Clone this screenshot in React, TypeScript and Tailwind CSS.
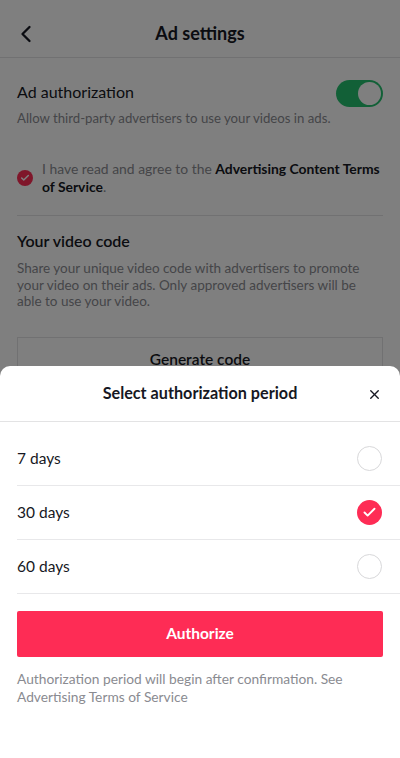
import { ChevronLeft, X, Check } from 'lucide-react'

const periods = [
  { label: '7 days', selected: false },
  { label: '30 days', selected: true },
  { label: '60 days', selected: false },
]

function Toggle() {
  return (
    <div className="flex h-[27px] w-[47px] items-center justify-end rounded-full bg-[#25c16f] px-[2px]">
      <div className="h-[23px] w-[23px] rounded-full bg-white" />
    </div>
  )
}

function Radio({ on }: { on: boolean }) {
  if (on) {
    return (
      <div className="flex h-[25px] w-[25px] items-center justify-center rounded-full bg-[#fe2c55]">
        <Check className="h-[15px] w-[15px] text-white" strokeWidth={3} />
      </div>
    )
  }
  return <div className="h-[25px] w-[25px] rounded-full border border-[#d8d8da]" />
}

export default function App() {
  return (
    <div
      className="relative h-[758px] w-[400px] overflow-hidden bg-white text-[#161823]"
      style={{ fontFamily: 'Lato, "Liberation Sans", sans-serif' }}
    >
      {/* Background page */}
      <div className="flex h-[58px] items-center justify-center border-b border-[#e3e3e4] pt-[10px]">
        <ChevronLeft className="absolute left-[12px] top-[20px] h-[28px] w-[28px]" strokeWidth={2} />
        <h1 className="text-[18px] font-bold">Ad settings</h1>
      </div>

      <div className="px-[17px]">
        <div className="flex items-start justify-between pt-[22px]">
          <div>
            <div className="text-[16px] leading-[24px]">Ad authorization</div>
            <div className="mt-[6px] text-[13.2px] leading-[16px] text-[#8a8b91]">
              Allow third-party advertisers to use your videos in ads.
            </div>
          </div>
          <Toggle />
        </div>

        <div className="mt-[34px] flex items-center gap-[9px] border-b border-[#e3e3e4] pb-[19px]">
          <div className="flex h-[16px] w-[16px] shrink-0 items-center justify-center rounded-full bg-[#fe2c55]">
            <Check className="h-[10px] w-[10px] text-white" strokeWidth={3.5} />
          </div>
          <p className="text-[13.9px] leading-[18px] text-[#8a8b91]">
            I have read and agree to the{' '}
            <b className="font-bold text-[#161823]">Advertising Content Terms</b>{' '}
            <b className="font-bold text-[#161823]">of Service</b>.
          </p>
        </div>

        <div className="mt-[14px] text-[16px] font-semibold leading-[22px]">Your video code</div>
        <p className="mt-[8px] text-[13.5px] leading-[16.5px] text-[#8a8b91]">
          Share your unique video code with advertisers to promote your video on their ads. Only approved
          advertisers will be able to use your video.
        </p>
        <div className="mt-[27px] flex h-[46px] items-center justify-center border border-[#e3e3e4] text-[15.5px] font-semibold">
          Generate code
        </div>
      </div>

      {/* Dim overlay */}
      <div className="absolute inset-0 bg-black/50" />

      {/* Bottom sheet */}
      <div className="absolute bottom-0 left-0 right-0 top-[366px] rounded-t-[10px] bg-white">
        <div className="relative flex h-[56px] items-center justify-center border-b border-[#e3e3e4]">
          <span className="text-[16.2px] font-bold">Select authorization period</span>
          <X className="absolute right-[18px] top-[21px] h-[15px] w-[15px]" strokeWidth={2.2} />
        </div>

        <div className="pl-[17px] pt-[10px]">
          {periods.map((p) => (
            <div key={p.label} className="flex h-[54px] items-center justify-between border-b border-[#e8e8ea] pr-[18px]">
              <span className="text-[15.5px]">{p.label}</span>
              <Radio on={p.selected} />
            </div>
          ))}
        </div>

        <div className="px-[17px] pt-[17px]">
          <button className="flex h-[46px] w-full items-center justify-center rounded-[2px] bg-[#fe2c55] text-[15.5px] font-bold text-white">
            Authorize
          </button>
          <p className="mt-[13px] text-[13.75px] leading-[18px] text-[#8a8b91]">
            Authorization period will begin after confirmation. See Advertising Terms of Service
          </p>
        </div>
      </div>
    </div>
  )
}
